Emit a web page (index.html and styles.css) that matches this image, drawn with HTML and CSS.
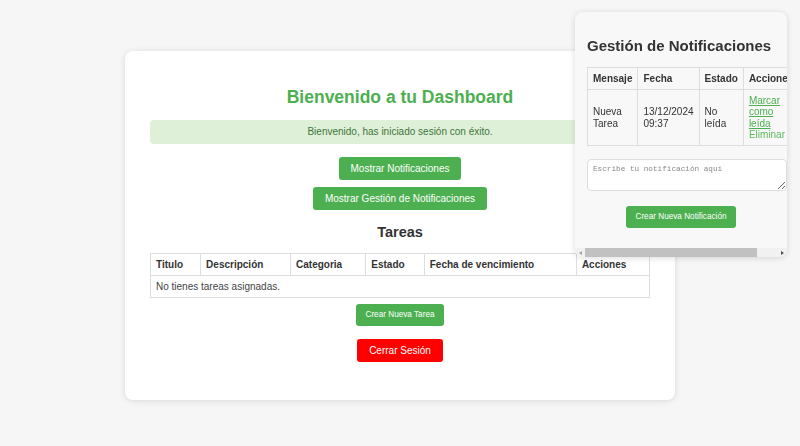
FILE: index.html
```html
<!DOCTYPE html>
<html lang="es">
<head>
<meta charset="utf-8">
<title>Dashboard</title>
<link rel="stylesheet" href="styles.css">
</head>
<body>
<main class="card">
  <h1 class="title">Bienvenido a tu Dashboard</h1>
  <div class="alert">Bienvenido, has iniciado sesión con éxito.</div>
  <div class="actions">
    <button class="btn">Mostrar Notificaciones</button>
    <button class="btn">Mostrar Gestión de Notificaciones</button>
  </div>
  <h2 class="section-title">Tareas</h2>
  <table class="tasks">
    <thead>
      <tr><th>Titulo</th><th>Descripción</th><th>Categoria</th><th>Estado</th><th>Fecha de vencimiento</th><th>Acciones</th></tr>
    </thead>
    <tbody>
      <tr><td colspan="6">No tienes tareas asignadas.</td></tr>
    </tbody>
  </table>
  <div class="stack">
    <button class="btn btn-small">Crear Nueva Tarea</button>
    <button class="btn btn-danger">Cerrar Sesión</button>
  </div>
</main>

<aside class="panel">
  <div class="panel-body">
    <h2 class="panel-title">Gestión de Notificaciones</h2>
    <table class="notif">
      <thead>
        <tr><th>Mensaje</th><th>Fecha</th><th>Estado</th><th>Acciones</th></tr>
      </thead>
      <tbody>
        <tr>
          <td>Nueva Tarea</td>
          <td>13/12/2024 09:37</td>
          <td>No leída</td>
          <td><a href="#" class="link">Marcar como leída</a> <span class="link-plain">Eliminar</span></td>
        </tr>
      </tbody>
    </table>
    <textarea class="note" placeholder="Escribe tu notificación aquí"></textarea>
    <div class="panel-actions">
      <button class="btn btn-small">Crear Nueva Notificación</button>
    </div>
  </div>
  <div class="hscroll">
    <span class="hscroll-btn"><span class="arrow arrow-left"></span></span>
    <span class="hscroll-track"><span class="hscroll-thumb"></span></span>
    <span class="hscroll-btn"><span class="arrow arrow-right"></span></span>
  </div>
</aside>
</body>
</html>
```
FILE: styles.css
```css
html, body {
  margin: 0;
  padding: 0;
}
body {
  background: #f6f6f6;
  font-family: "Liberation Sans", Arial, sans-serif;
  font-size: 10px;
  color: #333;
  height: 446px;
  overflow: hidden;
}
.card {
  box-sizing: border-box;
  width: 550px;
  margin: 51px auto 0;
  padding: 25px 25px 38px;
  background: #fff;
  border-radius: 8px;
  box-shadow: 0 1px 6px rgba(0, 0, 0, 0.12);
  display: flex;
  flex-direction: column;
  align-items: stretch;
}
.title {
  margin: 11px 0 13px;
  font-size: 17.5px;
  line-height: 20px;
  color: #4caf50;
  text-align: center;
}
.alert {
  background: #dff0d8;
  color: #3c763d;
  text-align: center;
  padding: 6px;
  line-height: 12px;
  border-radius: 4px;
}
.actions {
  margin-top: 13px;
  display: flex;
  flex-direction: column;
  align-items: center;
  gap: 7px;
}
.btn {
  font-family: "Liberation Sans", Arial, sans-serif;
  font-size: 10px;
  line-height: 12px;
  color: #fff;
  background: #4caf50;
  border: none;
  border-radius: 3px;
  padding: 5.5px 12px;
  cursor: pointer;
}
.btn-small {
  font-size: 8.2px;
  line-height: 10px;
  padding: 6px 9.5px;
}
.btn-danger {
  background: #ff0000;
  padding: 6px 12px 5.5px;
}
.section-title {
  margin: 14px 0 12px;
  font-size: 14.5px;
  line-height: 17px;
  text-align: center;
  color: #333;
}
.tasks {
  width: 100%;
  border-collapse: collapse;
}
.tasks th,
.tasks td,
.notif th,
.notif td {
  border: 1px solid #ddd;
  padding: 5px;
  line-height: 11.2px;
  text-align: left;
}
.tasks th,
.notif th {
  font-weight: bold;
  color: #333;
}
.tasks td {
  color: #444;
}
.stack {
  margin-top: 6px;
  display: flex;
  flex-direction: column;
  align-items: center;
  gap: 12.5px;
}

/* notification panel overlay */
.panel {
  position: fixed;
  top: 12px;
  right: 13px;
  width: 212px;
  background: #f8f8f8;
  border-radius: 8px;
  box-shadow: 0 1px 6px rgba(0, 0, 0, 0.14);
  overflow: hidden;
  display: flex;
  flex-direction: column;
}
.panel-body {
  padding: 12px 12px 20px;
  overflow: hidden;
}
.panel-title {
  margin: 13px 0 13px;
  font-size: 15px;
  line-height: 17px;
  color: #333;
  white-space: nowrap;
}
.notif {
  border-collapse: collapse;
  color: #333;
}
.link {
  color: #4caf50;
  text-decoration: underline;
}
.link-plain {
  color: #5cb85c;
}
.note {
  display: block;
  box-sizing: border-box;
  width: 200px;
  height: 32px;
  margin: 13px 0 0;
  padding: 5px;
  border: 1px solid #ddd;
  border-radius: 4px;
  background: #fff;
  font-family: "Liberation Mono", "DejaVu Sans Mono", monospace;
  font-size: 7.7px;
  resize: both;
}
.note::placeholder {
  color: #888;
}
.panel-actions {
  margin-top: 15px;
  display: flex;
  justify-content: center;
}

/* horizontal scrollbar of the panel */
.hscroll {
  display: flex;
  height: 9px;
  background: #f1f1f1;
}
.hscroll-btn {
  width: 10px;
  flex: none;
  display: flex;
  align-items: center;
  justify-content: center;
}
.hscroll-track {
  flex: 1;
  display: flex;
}
.hscroll-thumb {
  width: 172px;
  background: #c1c1c1;
}
.arrow {
  width: 0;
  height: 0;
  border-top: 2.5px solid transparent;
  border-bottom: 2.5px solid transparent;
}
.arrow-left {
  border-right: 3px solid #a3a3a3;
}
.arrow-right {
  border-left: 3px solid #505050;
}
```
